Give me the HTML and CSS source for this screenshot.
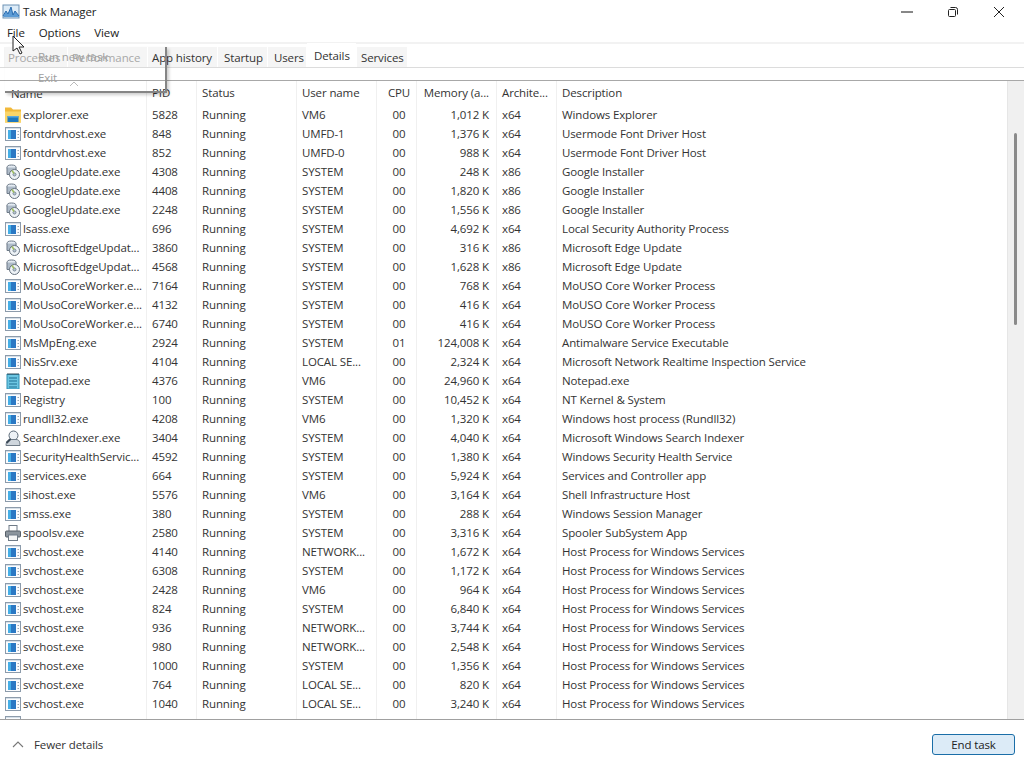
FILE: index.html
```html
<!DOCTYPE html>
<html lang="en">
<head>
<meta charset="utf-8">
<title>Task Manager</title>
<link rel="stylesheet" href="styles.css">
</head>
<body>
<svg class="defs" width="0" height="0">
<symbol id="exe" viewBox="0 0 16 16"><rect x="0.5" y="1.5" width="15" height="13" fill="#fbfcfe" stroke="#8c9bab"/><rect x="1" y="2" width="14" height="1" fill="#d5dfe8"/><rect x="3" y="4" width="8" height="9" fill="#2a78c4"/><rect x="3" y="4" width="3" height="9" fill="#45aee6"/><rect x="12.500" y="5" width="1.500" height="1" fill="#9aa8b5"/><rect x="12.500" y="8" width="1.500" height="1" fill="#9aa8b5"/><rect x="12.500" y="11" width="1.500" height="1" fill="#9aa8b5"/></symbol>
<symbol id="folder" viewBox="0 0 16 16"><path d="M0 0.500h6l2 2h8v13H0z" fill="#f2b93a"/><path d="M0 4.500h16v11H0z" fill="#fbd568"/><rect x="2.500" y="9" width="11" height="6" fill="#1d78c0"/><rect x="2.500" y="9" width="11" height="1.500" fill="#5aa9e0"/></symbol>
<symbol id="inst" viewBox="0 0 16 16"><ellipse cx="6.500" cy="3.500" rx="4.500" ry="2.500" fill="#e4ebf2" stroke="#6c7987"/><path d="M2 3.500v7h9v-7" fill="#aebbc8" stroke="#6c7987"/><circle cx="9.500" cy="10.500" r="5" fill="#eef3f7" stroke="#66727f"/><circle cx="9.500" cy="10.500" r="1.500" fill="#b5c4d2" stroke="#7d8a97"/><path d="M7 6.500l2 3" stroke="#9cbc5c" stroke-width="1.500"/></symbol>
<symbol id="note" viewBox="0 0 16 16"><rect x="2" y="1.500" width="12" height="14.500" fill="#6cc6e2" stroke="#2e8fb3"/><path d="M4 5h8M4 8h8M4 11h8M4 14h8" stroke="#1c6f93"/><path d="M3 0v2M5 0v2M7 0v2M9 0v2M11 0v2M13 0v2" stroke="#35505f"/></symbol>
<symbol id="search" viewBox="0 0 16 16"><circle cx="8.500" cy="5.500" r="4.500" fill="#eef2f6" stroke="#5c6a78"/><path d="M1 15.500c0-5 3-6 5-6h5c3 0 4 2 4 6z" fill="#cfd6dd" stroke="#6f7b87"/><path d="M5.500 9L1.500 13" stroke="#3c4a58" stroke-width="2"/></symbol>
<symbol id="printer" viewBox="0 0 16 16"><rect x="4" y="0.500" width="8" height="6" fill="#fff" stroke="#6f7b87"/><rect x="0.500" y="6" width="15" height="6" rx="1" fill="#8b949d" stroke="#565f68"/><rect x="3.500" y="10" width="9" height="5.500" fill="#f4f5f6" stroke="#6f7b87"/></symbol>
</svg>

<div class="window">
  <header class="titlebar">
    <svg class="appicon" width="18" height="16" viewBox="0 0 18 16"><rect x="1" y="1" width="16" height="13" fill="#dcebf7" stroke="#6f93b5"/><path d="M1 13L4 7l2 3 3-7 2 8 2-4 4 5v1H1z" fill="#5b9bd5"/><path d="M1 12L4 7l2 3 3-7 2 8 2-4 4 5" fill="none" stroke="#2a6cb0"/></svg>
    <span class="apptitle">Task Manager</span>
    <div class="winbtns">
      <svg width="16" height="16" viewBox="0 0 16 16"><path d="M2 8h12" stroke="#111" fill="none"/></svg>
      <svg width="16" height="16" viewBox="0 0 16 16"><rect x="3.500" y="5.500" width="7" height="7" rx="1" fill="none" stroke="#222"/><path d="M5.500 3.500h5a2 2 0 0 1 2 2v5" fill="none" stroke="#222"/></svg>
      <svg width="16" height="16" viewBox="0 0 16 16"><path d="M3 3l10 10M13 3L3 13" stroke="#222" fill="none"/></svg>
    </div>
  </header>
  <nav class="menubar"><span class="menu-item">File</span><span class="menu-item">Options</span><span class="menu-item">View</span></nav>
  <div class="tabs">
    <span class="tab tab-p">Processes</span>
    <span class="tab tab-f">Performance</span>
    <span class="tab tab-h">App history</span>
    <span class="tab tab-s">Startup</span>
    <span class="tab tab-u">Users</span>
    <span class="tab tab-d active">Details</span>
    <span class="tab tab-v">Services</span>
  </div>
  <main class="list">
    <div class="rows">
      <div class="row head"><span class="c name">Name</span><span class="c pid">PID</span><span class="c status">Status</span><span class="c user">User name</span><span class="c cpu">CPU</span><span class="c mem">Memory (a...</span><span class="c arch">Archite...</span><span class="c desc">Description</span></div>
      <div class="body">
        <div class="row"><span class="c name"><svg class="ico"><use href="#folder"/></svg>explorer.exe</span><span class="c pid">5828</span><span class="c status">Running</span><span class="c user">VM6</span><span class="c cpu">00</span><span class="c mem">1,012 K</span><span class="c arch">x64</span><span class="c desc">Windows Explorer</span></div>
        <div class="row"><span class="c name"><svg class="ico"><use href="#exe"/></svg>fontdrvhost.exe</span><span class="c pid">848</span><span class="c status">Running</span><span class="c user">UMFD-1</span><span class="c cpu">00</span><span class="c mem">1,376 K</span><span class="c arch">x64</span><span class="c desc">Usermode Font Driver Host</span></div>
        <div class="row"><span class="c name"><svg class="ico"><use href="#exe"/></svg>fontdrvhost.exe</span><span class="c pid">852</span><span class="c status">Running</span><span class="c user">UMFD-0</span><span class="c cpu">00</span><span class="c mem">988 K</span><span class="c arch">x64</span><span class="c desc">Usermode Font Driver Host</span></div>
        <div class="row"><span class="c name"><svg class="ico"><use href="#inst"/></svg>GoogleUpdate.exe</span><span class="c pid">4308</span><span class="c status">Running</span><span class="c user">SYSTEM</span><span class="c cpu">00</span><span class="c mem">248 K</span><span class="c arch">x86</span><span class="c desc">Google Installer</span></div>
        <div class="row"><span class="c name"><svg class="ico"><use href="#inst"/></svg>GoogleUpdate.exe</span><span class="c pid">4408</span><span class="c status">Running</span><span class="c user">SYSTEM</span><span class="c cpu">00</span><span class="c mem">1,820 K</span><span class="c arch">x86</span><span class="c desc">Google Installer</span></div>
        <div class="row"><span class="c name"><svg class="ico"><use href="#inst"/></svg>GoogleUpdate.exe</span><span class="c pid">2248</span><span class="c status">Running</span><span class="c user">SYSTEM</span><span class="c cpu">00</span><span class="c mem">1,556 K</span><span class="c arch">x86</span><span class="c desc">Google Installer</span></div>
        <div class="row"><span class="c name"><svg class="ico"><use href="#exe"/></svg>lsass.exe</span><span class="c pid">696</span><span class="c status">Running</span><span class="c user">SYSTEM</span><span class="c cpu">00</span><span class="c mem">4,692 K</span><span class="c arch">x64</span><span class="c desc">Local Security Authority Process</span></div>
        <div class="row"><span class="c name"><svg class="ico"><use href="#inst"/></svg>MicrosoftEdgeUpdat...</span><span class="c pid">3860</span><span class="c status">Running</span><span class="c user">SYSTEM</span><span class="c cpu">00</span><span class="c mem">316 K</span><span class="c arch">x86</span><span class="c desc">Microsoft Edge Update</span></div>
        <div class="row"><span class="c name"><svg class="ico"><use href="#inst"/></svg>MicrosoftEdgeUpdat...</span><span class="c pid">4568</span><span class="c status">Running</span><span class="c user">SYSTEM</span><span class="c cpu">00</span><span class="c mem">1,628 K</span><span class="c arch">x86</span><span class="c desc">Microsoft Edge Update</span></div>
        <div class="row"><span class="c name"><svg class="ico"><use href="#exe"/></svg>MoUsoCoreWorker.e...</span><span class="c pid">7164</span><span class="c status">Running</span><span class="c user">SYSTEM</span><span class="c cpu">00</span><span class="c mem">768 K</span><span class="c arch">x64</span><span class="c desc">MoUSO Core Worker Process</span></div>
        <div class="row"><span class="c name"><svg class="ico"><use href="#exe"/></svg>MoUsoCoreWorker.e...</span><span class="c pid">4132</span><span class="c status">Running</span><span class="c user">SYSTEM</span><span class="c cpu">00</span><span class="c mem">416 K</span><span class="c arch">x64</span><span class="c desc">MoUSO Core Worker Process</span></div>
        <div class="row"><span class="c name"><svg class="ico"><use href="#exe"/></svg>MoUsoCoreWorker.e...</span><span class="c pid">6740</span><span class="c status">Running</span><span class="c user">SYSTEM</span><span class="c cpu">00</span><span class="c mem">416 K</span><span class="c arch">x64</span><span class="c desc">MoUSO Core Worker Process</span></div>
        <div class="row"><span class="c name"><svg class="ico"><use href="#exe"/></svg>MsMpEng.exe</span><span class="c pid">2924</span><span class="c status">Running</span><span class="c user">SYSTEM</span><span class="c cpu">01</span><span class="c mem">124,008 K</span><span class="c arch">x64</span><span class="c desc">Antimalware Service Executable</span></div>
        <div class="row"><span class="c name"><svg class="ico"><use href="#exe"/></svg>NisSrv.exe</span><span class="c pid">4104</span><span class="c status">Running</span><span class="c user">LOCAL SE...</span><span class="c cpu">00</span><span class="c mem">2,324 K</span><span class="c arch">x64</span><span class="c desc">Microsoft Network Realtime Inspection Service</span></div>
        <div class="row"><span class="c name"><svg class="ico"><use href="#note"/></svg>Notepad.exe</span><span class="c pid">4376</span><span class="c status">Running</span><span class="c user">VM6</span><span class="c cpu">00</span><span class="c mem">24,960 K</span><span class="c arch">x64</span><span class="c desc">Notepad.exe</span></div>
        <div class="row"><span class="c name"><svg class="ico"><use href="#exe"/></svg>Registry</span><span class="c pid">100</span><span class="c status">Running</span><span class="c user">SYSTEM</span><span class="c cpu">00</span><span class="c mem">10,452 K</span><span class="c arch">x64</span><span class="c desc">NT Kernel &amp; System</span></div>
        <div class="row"><span class="c name"><svg class="ico"><use href="#exe"/></svg>rundll32.exe</span><span class="c pid">4208</span><span class="c status">Running</span><span class="c user">VM6</span><span class="c cpu">00</span><span class="c mem">1,320 K</span><span class="c arch">x64</span><span class="c desc">Windows host process (Rundll32)</span></div>
        <div class="row"><span class="c name"><svg class="ico"><use href="#search"/></svg>SearchIndexer.exe</span><span class="c pid">3404</span><span class="c status">Running</span><span class="c user">SYSTEM</span><span class="c cpu">00</span><span class="c mem">4,040 K</span><span class="c arch">x64</span><span class="c desc">Microsoft Windows Search Indexer</span></div>
        <div class="row"><span class="c name"><svg class="ico"><use href="#exe"/></svg>SecurityHealthServic...</span><span class="c pid">4592</span><span class="c status">Running</span><span class="c user">SYSTEM</span><span class="c cpu">00</span><span class="c mem">1,380 K</span><span class="c arch">x64</span><span class="c desc">Windows Security Health Service</span></div>
        <div class="row"><span class="c name"><svg class="ico"><use href="#exe"/></svg>services.exe</span><span class="c pid">664</span><span class="c status">Running</span><span class="c user">SYSTEM</span><span class="c cpu">00</span><span class="c mem">5,924 K</span><span class="c arch">x64</span><span class="c desc">Services and Controller app</span></div>
        <div class="row"><span class="c name"><svg class="ico"><use href="#exe"/></svg>sihost.exe</span><span class="c pid">5576</span><span class="c status">Running</span><span class="c user">VM6</span><span class="c cpu">00</span><span class="c mem">3,164 K</span><span class="c arch">x64</span><span class="c desc">Shell Infrastructure Host</span></div>
        <div class="row"><span class="c name"><svg class="ico"><use href="#exe"/></svg>smss.exe</span><span class="c pid">380</span><span class="c status">Running</span><span class="c user">SYSTEM</span><span class="c cpu">00</span><span class="c mem">288 K</span><span class="c arch">x64</span><span class="c desc">Windows Session Manager</span></div>
        <div class="row"><span class="c name"><svg class="ico"><use href="#printer"/></svg>spoolsv.exe</span><span class="c pid">2580</span><span class="c status">Running</span><span class="c user">SYSTEM</span><span class="c cpu">00</span><span class="c mem">3,316 K</span><span class="c arch">x64</span><span class="c desc">Spooler SubSystem App</span></div>
        <div class="row"><span class="c name"><svg class="ico"><use href="#exe"/></svg>svchost.exe</span><span class="c pid">4140</span><span class="c status">Running</span><span class="c user">NETWORK...</span><span class="c cpu">00</span><span class="c mem">1,672 K</span><span class="c arch">x64</span><span class="c desc">Host Process for Windows Services</span></div>
        <div class="row"><span class="c name"><svg class="ico"><use href="#exe"/></svg>svchost.exe</span><span class="c pid">6308</span><span class="c status">Running</span><span class="c user">SYSTEM</span><span class="c cpu">00</span><span class="c mem">1,172 K</span><span class="c arch">x64</span><span class="c desc">Host Process for Windows Services</span></div>
        <div class="row"><span class="c name"><svg class="ico"><use href="#exe"/></svg>svchost.exe</span><span class="c pid">2428</span><span class="c status">Running</span><span class="c user">VM6</span><span class="c cpu">00</span><span class="c mem">964 K</span><span class="c arch">x64</span><span class="c desc">Host Process for Windows Services</span></div>
        <div class="row"><span class="c name"><svg class="ico"><use href="#exe"/></svg>svchost.exe</span><span class="c pid">824</span><span class="c status">Running</span><span class="c user">SYSTEM</span><span class="c cpu">00</span><span class="c mem">6,840 K</span><span class="c arch">x64</span><span class="c desc">Host Process for Windows Services</span></div>
        <div class="row"><span class="c name"><svg class="ico"><use href="#exe"/></svg>svchost.exe</span><span class="c pid">936</span><span class="c status">Running</span><span class="c user">NETWORK...</span><span class="c cpu">00</span><span class="c mem">3,744 K</span><span class="c arch">x64</span><span class="c desc">Host Process for Windows Services</span></div>
        <div class="row"><span class="c name"><svg class="ico"><use href="#exe"/></svg>svchost.exe</span><span class="c pid">980</span><span class="c status">Running</span><span class="c user">NETWORK...</span><span class="c cpu">00</span><span class="c mem">2,548 K</span><span class="c arch">x64</span><span class="c desc">Host Process for Windows Services</span></div>
        <div class="row"><span class="c name"><svg class="ico"><use href="#exe"/></svg>svchost.exe</span><span class="c pid">1000</span><span class="c status">Running</span><span class="c user">SYSTEM</span><span class="c cpu">00</span><span class="c mem">1,356 K</span><span class="c arch">x64</span><span class="c desc">Host Process for Windows Services</span></div>
        <div class="row"><span class="c name"><svg class="ico"><use href="#exe"/></svg>svchost.exe</span><span class="c pid">764</span><span class="c status">Running</span><span class="c user">LOCAL SE...</span><span class="c cpu">00</span><span class="c mem">820 K</span><span class="c arch">x64</span><span class="c desc">Host Process for Windows Services</span></div>
        <div class="row"><span class="c name"><svg class="ico"><use href="#exe"/></svg>svchost.exe</span><span class="c pid">1040</span><span class="c status">Running</span><span class="c user">LOCAL SE...</span><span class="c cpu">00</span><span class="c mem">3,240 K</span><span class="c arch">x64</span><span class="c desc">Host Process for Windows Services</span></div>
        <div class="row"><span class="c name"><svg class="ico"><use href="#exe"/></svg>svchost.exe</span><span class="c pid">1032</span><span class="c status">Running</span><span class="c user">SYSTEM</span><span class="c cpu">00</span><span class="c mem">1,836 K</span><span class="c arch">x64</span><span class="c desc">Host Process for Windows Services</span></div>
      </div>
    </div>
    <div class="scrollbar"><div class="thumb"></div></div>
  </main>
  <footer class="footer">
    <svg class="chev" width="12" height="8" viewBox="0 0 12 8"><path d="M1 7l5-5 5 5" fill="none" stroke="#777" stroke-width="1.100"/></svg>
    <span class="fewer">Fewer details</span>
    <button class="endtask">End task</button>
  </footer>

  <div class="ghost">
    <span class="ghost-run">Run new task</span>
    <span class="ghost-exit">Exit</span>
    <svg class="ghost-caret" width="10" height="6" viewBox="0 0 10 6"><path d="M1 5l4-4 4 4" fill="none" stroke="#bbb"/></svg>
  </div>
  <svg class="cursor" width="13" height="20" viewBox="0 0 13 20"><path d="M1 1v15l4-3 3 6 2-1-3-6h5z" fill="#fff" stroke="#222"/></svg>
</div>
</body>
</html>
```
FILE: styles.css
```css
* { box-sizing: border-box; }
html, body { margin: 0; height: 100%; }
body { background: #fff; color: #333; font: 11.5px/19px "Open Sans", "Noto Sans", "Liberation Sans", sans-serif; letter-spacing: -0.12px; overflow: hidden; }
.defs { position: absolute; }
.window { position: relative; width: 1024px; height: 768px; display: flex; flex-direction: column; overflow: hidden; }

.titlebar { height: 23px; display: flex; align-items: center; padding-left: 2px; flex: none; }
.appicon { margin-right: 3px; }
.apptitle { color: #222; }
.winbtns { margin-left: auto; display: flex; gap: 30px; padding-right: 17px; }

.menubar { height: 19px; display: flex; padding-left: 7px; gap: 14px; flex: none; color: #222; align-items: center; }

.tabs { height: 26px; flex: none; display: flex; align-items: flex-end; background: #fff; border-top: 2px solid #f2f2f2; border-bottom: 1px solid #dcdcdc; padding-left: 4px; gap: 1px; }
.tab { height: 20px; line-height: 21px; background: #f5f5f5; color: #333; flex: none; white-space: nowrap; }
.tab.active { height: 24px; background: #fff; line-height: 25px; }
.tab-p { width: 63px; padding-left: 4px; color: #a8a8a8; }
.tab-f { width: 79px; padding-left: 4px; color: #a8a8a8; }
.tab-h { width: 69px; padding-left: 4px; }
.tab-s { width: 49px; padding-left: 6px; }
.tab-u { width: 38px; padding-left: 6px; }
.tab-d { width: 49px; padding-left: 7px; }
.tab-v { width: 50px; padding-left: 4px; }

.list { position: relative; height: 640px; flex: none; display: flex; margin-top: 12px; border-top: 1px solid #a8a8a8; border-bottom: 1px solid #a0a0a0; overflow: hidden; }
.rows { flex: 1; min-width: 0; }
.body { display: flex; flex-direction: column; }
.row { display: grid; grid-template-columns: 146px 50px 100px 80px 40px 80px 60px 1fr; height: 19px; white-space: nowrap; }
.row.head { height: 24px; line-height: 23px; }
.c { padding: 0 6px 0 5px; overflow: hidden; border-left: 1px solid #f0f0f0; }
.name { padding: 0 0 0 5px; display: flex; align-items: center; border-left: 0; }
.head .name { padding-left: 11px; }
.cpu { text-align: center; padding: 0 1px 0 6px; }
.mem { text-align: right; padding-right: 7px; }
.ico { width: 16px; height: 16px; margin-right: 2px; flex: none; }

.scrollbar { width: 17px; flex: none; background: #f0f0f0; border-left: 1px solid #e6e6e6; position: relative; }
.thumb { position: absolute; right: 7px; top: 52px; width: 3px; height: 192px; background: #8a8a8a; border-radius: 2px; }

.footer { flex: 1; display: flex; align-items: center; padding: 0 9px 0 12px; }
.chev { margin-right: 10px; }
.endtask { margin-left: auto; width: 83px; height: 21px; padding: 0; font: inherit; letter-spacing: inherit; line-height: 17px; color: #222; background: #dcebf7; border: 1px solid #1a6ea8; border-radius: 3px; }

.ghost { position: absolute; left: 5px; top: 47px; width: 162px; height: 46px; border-right: 2px solid #858585; border-bottom: 2px solid #858585; box-shadow: 2px 2px 3px rgba(0,0,0,.2); }
.ghost-run { position: absolute; left: 33px; top: 0; color: #a0a0a0; }
.ghost-exit { position: absolute; left: 33px; top: 21px; color: #a0a0a0; }
.ghost-caret { position: absolute; left: 64px; top: 34px; }
.cursor { position: absolute; left: 12px; top: 35px; }
```
